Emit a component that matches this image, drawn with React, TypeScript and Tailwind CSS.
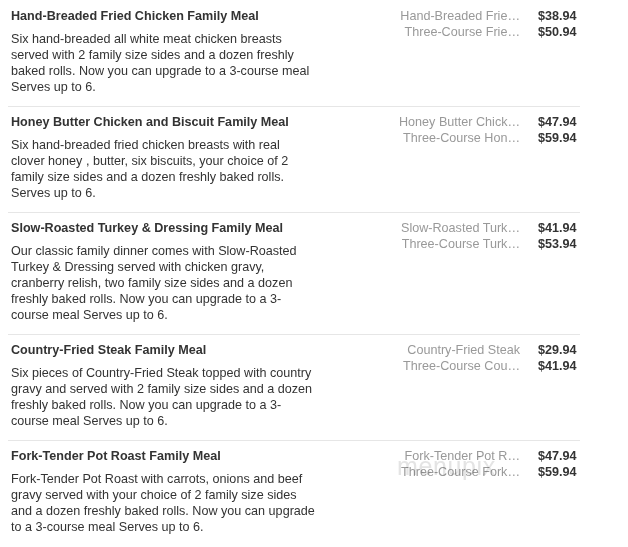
const meals = [
  {
    title: 'Hand-Breaded Fried Chicken Family Meal',
    desc: 'Six hand-breaded all white meat chicken breasts served with 2 family size sides and a dozen freshly baked rolls. Now you can upgrade to a 3-course meal Serves up to 6.',
    options: [
      ['Hand-Breaded Frie…', '$38.94'],
      ['Three-Course Frie…', '$50.94'],
    ],
  },
  {
    title: 'Honey Butter Chicken and Biscuit Family Meal',
    desc: 'Six hand-breaded fried chicken breasts with real clover honey , butter, six biscuits, your choice of 2 family size sides and a dozen freshly baked rolls. Serves up to 6.',
    options: [
      ['Honey Butter Chick…', '$47.94'],
      ['Three-Course Hon…', '$59.94'],
    ],
  },
  {
    title: 'Slow-Roasted Turkey & Dressing Family Meal',
    desc: 'Our classic family dinner comes with Slow-Roasted Turkey & Dressing served with chicken gravy, cranberry relish, two family size sides and a dozen freshly baked rolls. Now you can upgrade to a 3-course meal Serves up to 6.',
    options: [
      ['Slow-Roasted Turk…', '$41.94'],
      ['Three-Course Turk…', '$53.94'],
    ],
  },
  {
    title: 'Country-Fried Steak Family Meal',
    desc: 'Six pieces of Country-Fried Steak topped with country gravy and served with 2 family size sides and a dozen freshly baked rolls. Now you can upgrade to a 3-course meal Serves up to 6.',
    options: [
      ['Country-Fried Steak', '$29.94'],
      ['Three-Course Cou…', '$41.94'],
    ],
  },
  {
    title: 'Fork-Tender Pot Roast Family Meal',
    desc: 'Fork-Tender Pot Roast with carrots, onions and beef gravy served with your choice of 2 family size sides and a dozen freshly baked rolls. Now you can upgrade to a 3-course meal Serves up to 6.',
    options: [
      ['Fork-Tender Pot R…', '$47.94'],
      ['Three-Course Fork…', '$59.94'],
    ],
  },
]

export default function App() {
  return (
    <div className="min-h-[547px] bg-white pt-[1px] font-['Liberation_Sans',Arial,sans-serif] text-[12.6px] leading-[16px] text-[#333]">
      <div className="ml-[8px] w-[572px]">
        {meals.map((m, i) => (
          <div
            key={m.title}
            className={`relative flex pt-[7px] pb-[11px] pl-[3px] ${i < meals.length - 1 ? 'border-b border-[#e6e6e6]' : ''}`}
          >
            <div className="w-[305px] shrink-0">
              <h3 className="font-bold">{m.title}</h3>
              <p className="mt-[7px]">{m.desc}</p>
            </div>
            <div className="ml-[83px]">
              {m.options.map(([name, price]) => (
                <div key={name} className="flex">
                  <span className="w-[121px] whitespace-nowrap text-right text-[#999]">{name}</span>
                  <span className="ml-[18px] font-bold">{price}</span>
                </div>
              ))}
            </div>
            {/* faint watermark over the last row */}
            {i === meals.length - 1 && (
              <span className="pointer-events-none absolute left-[389px] top-[10px] text-[25px] leading-[30px] tracking-wide text-[#e4e4e4] mix-blend-multiply">
                menupix
              </span>
            )}
          </div>
        ))}
      </div>
    </div>
  )
}
